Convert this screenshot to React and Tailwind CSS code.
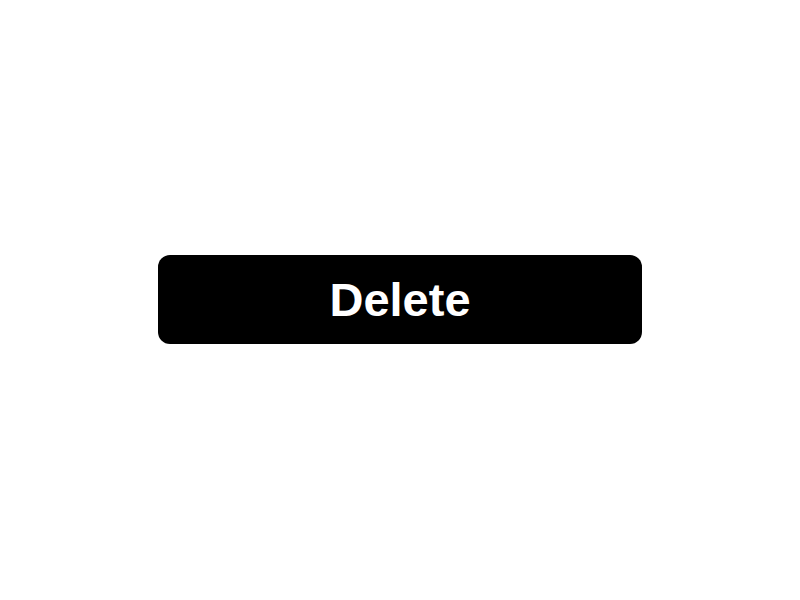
export default function App() {
  return (
    <div className="flex h-screen w-full items-center justify-center bg-white pb-[2px]" style={{ fontFamily: '"Liberation Sans", Arial, sans-serif' }}>
      <button className="flex h-[89px] w-[484px] items-center justify-center rounded-[12px] bg-black text-[47px] font-bold leading-none text-white">
        Delete
      </button>
    </div>
  );
}
